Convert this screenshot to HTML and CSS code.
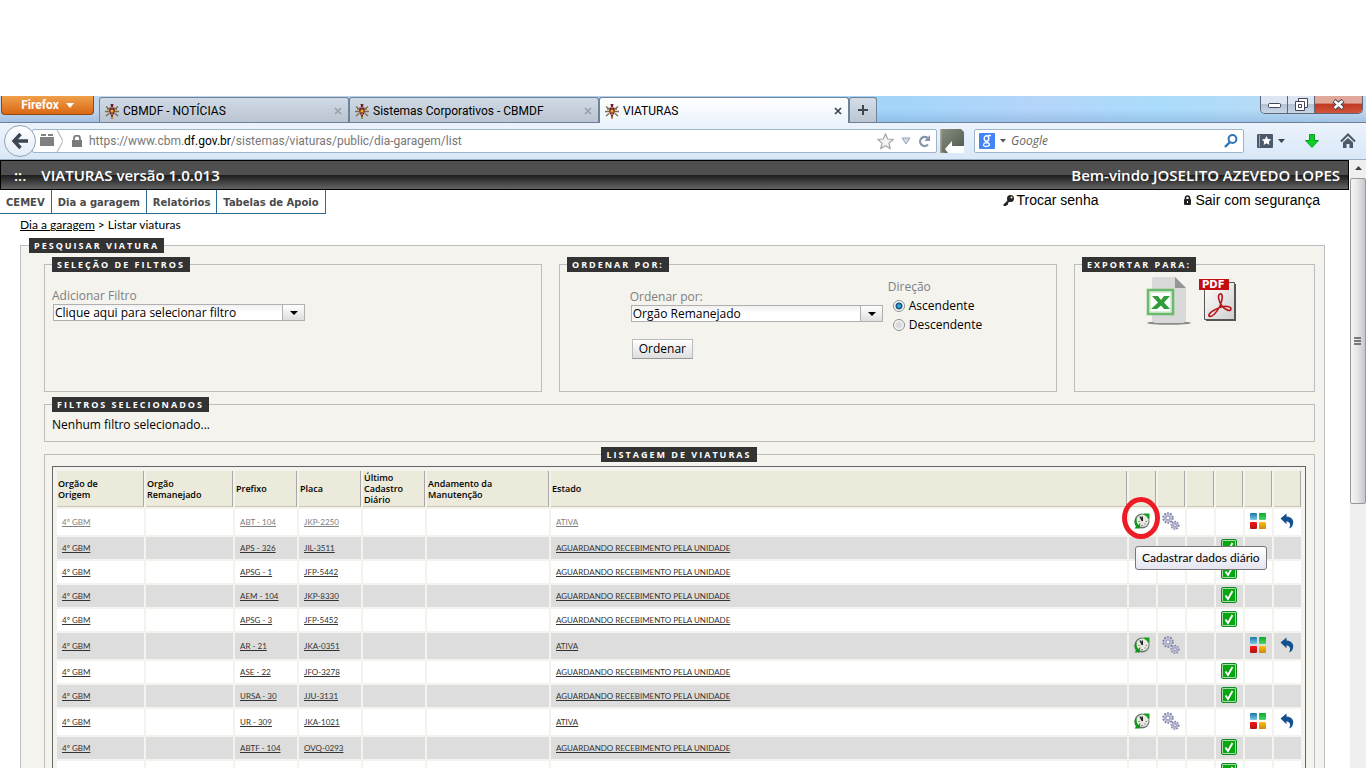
FILE: index.html
```html
<!DOCTYPE html>
<html lang="pt-BR">
<head>
<meta charset="utf-8">
<title>VIATURAS</title>
<link rel="stylesheet" href="styles.css">
</head>
<body>
<svg class="sprite" aria-hidden="true">
  <symbol id="crest" viewBox="0 0 16 16">
    <path d="M2 3.500l3 2.500M14 3.500L11 6M1 8.500h4M11 8.500h4M2 13l3-2.500M14 13l-3-2.500M3 6h2M11 6h2" stroke="#7d6f45" stroke-width="1.400"/>
    <path d="M6.500 1h3L9 4H7zM7 12h2v3.500H7z" fill="#6b1f2a"/>
    <path d="M5.500 4.500h5l.5 3.500-1 3.500H6L5 8z" fill="#6b1f2a"/>
    <path d="M8 5.500l2.500 2.500L8 11 5.500 8z" fill="#d8a820"/>
    <circle cx="8" cy="8" r="1.500" fill="#f6e21c" stroke="#a82828" stroke-width=".8"/>
    <path d="M8 13.500v2" stroke="#c8b020" stroke-width="1.500"/>
  </symbol>
  <symbol id="clock" viewBox="0 0 16 16">
    <circle cx="8" cy="8" r="7.500" fill="#66786a"/>
    <circle cx="8.300" cy="7.800" r="6.200" fill="#e9e9e2"/>
    <path d="M6 3.500L8.300 8V3.500" fill="none" stroke="#222" stroke-width="1.400"/>
    <path d="M4.500 8.500h1M8 12v1.200M11.800 8.500h1M10.500 11h1M5.500 11h1" stroke="#555" stroke-width="1.200"/>
    <path d="M10 .5h5.500V6.500L13.500 4.500C12.600 3.200 11.500 2.300 10 2z" fill="#12a51c"/>
    <path d="M1.500 5C-.2 9 .5 11.500 2 13.500L.5 15.500H6V10.500L4.500 12C3 10.500 2.200 8.500 2.700 5.500z" fill="#12951c"/>
  </symbol>
  <symbol id="gears" viewBox="0 0 18 18">
    <circle cx="6" cy="6" r="4.700" fill="none" stroke="#77799a" stroke-width="2" stroke-dasharray="1.800 1.150"/>
    <circle cx="6" cy="6" r="3.200" fill="#fff" stroke="#b9bbd6" stroke-width="2.400"/>
    <circle cx="6" cy="6" r="1.900" fill="none" stroke="#77799a" stroke-width=".7"/>
    <circle cx="13" cy="13.300" r="3.500" fill="none" stroke="#77799a" stroke-width="2" stroke-dasharray="1.500 1.100"/>
    <circle cx="13" cy="13.300" r="2.400" fill="#fff" stroke="#b3b5d4" stroke-width="2"/>
    <circle cx="13" cy="13.300" r="1.300" fill="none" stroke="#77799a" stroke-width=".7"/>
  </symbol>
  <linearGradient id="gb" x2="0" y2="1"><stop stop-color="#1976a8"/><stop offset="1" stop-color="#7cc6e8"/></linearGradient>
  <linearGradient id="gg" x2="0" y2="1"><stop stop-color="#06a828"/><stop offset="1" stop-color="#4fd66a"/></linearGradient>
  <linearGradient id="gr" x2="0" y2="1"><stop stop-color="#fa1414"/><stop offset="1" stop-color="#b01515"/></linearGradient>
  <linearGradient id="gy" x2="0" y2="1"><stop stop-color="#fdc010"/><stop offset="1" stop-color="#c98a08"/></linearGradient>
  <linearGradient id="gp" x2="1" y2="1"><stop stop-color="#fff"/><stop offset="1" stop-color="#cfcfcf"/></linearGradient>
  <linearGradient id="gm" x2="1" y2="1"><stop stop-color="#8a9080"/><stop offset="1" stop-color="#4c564a"/></linearGradient>
  <symbol id="squares" viewBox="0 0 16 16">
    <rect width="7" height="7" rx="1" fill="url(#gb)"/>
    <rect x="9" width="7" height="7" rx="1" fill="url(#gg)"/>
    <rect y="9" width="7" height="7" rx="1" fill="url(#gr)"/>
    <rect x="9" y="9" width="7" height="7" rx="1" fill="url(#gy)"/>
  </symbol>
  <symbol id="undo" viewBox="0 0 16 16">
    <path d="M1.500 5.500L7.500.500v3c6 .3 8.500 5 5.500 10-.8 1-1.800 1.700-3 2 2-3.500 1.500-6.500-2.500-7.300v3z" fill="#14508f"/>
  </symbol>
  <symbol id="check" viewBox="0 0 16 16">
    <rect x=".5" y=".5" width="15" height="15" rx="1.500" fill="#a5dba5" stroke="#118a1b"/>
    <rect x="2" y="2" width="12" height="12" fill="#0aa512"/>
    <path d="M4.500 8.500l2.500 3.500 4.500-8" fill="none" stroke="#fff" stroke-width="1.900"/>
  </symbol>
  <symbol id="close" viewBox="0 0 8 8"><path d="M1 1l6 6M7 1L1 7" stroke="currentColor" stroke-width="1.700"/></symbol>
</svg>

<header class="browser">
  <div class="titlebar">
    <button class="firefox" type="button">Firefox <span class="caret"></span></button>
    <nav class="tabs">
      <div class="tab"><svg class="i16"><use href="#crest"/></svg><span class="tab-name">CBMDF - NOTÍCIAS</span><svg class="i8"><use href="#close"/></svg></div>
      <div class="tab"><svg class="i16"><use href="#crest"/></svg><span class="tab-name">Sistemas Corporativos - CBMDF</span><svg class="i8"><use href="#close"/></svg></div>
      <div class="tab tab-active"><svg class="i16"><use href="#crest"/></svg><span class="tab-name">VIATURAS</span><svg class="i8"><use href="#close"/></svg></div>
      <button class="tab-new" type="button" aria-label="Nova aba"><svg width="12" height="12"><path d="M6 1v10M1 6h10" stroke="#3c4650" stroke-width="2"/></svg></button>
    </nav>
    <div class="controls">
      <button type="button" class="ctl" aria-label="Minimizar"><svg width="13" height="6"><rect x=".5" y="1.500" width="12" height="4" rx="1" fill="#fff" stroke="#445"/></svg></button>
      <button type="button" class="ctl" aria-label="Restaurar"><svg width="13" height="13"><path d="M3.500 3V.5h9v9H10M.5 3.500h9v9h-9zM3.500 6.500h3v3h-3z" fill="#fff" stroke="#445"/></svg></button>
      <button type="button" class="ctl ctl-close" aria-label="Fechar"><svg width="13" height="11"><path d="M2 1.500l9 8M11 1.500l-9 8" stroke="#445" stroke-width="4.500"/><path d="M2.500 2l8 7M10.500 2l-8 7" stroke="#fff" stroke-width="2.500"/></svg></button>
    </div>
  </div>
  <div class="toolbar">
    <button class="back" type="button" aria-label="Voltar"><svg width="18" height="18"><path d="M9.500 2L3 9l6.500 7M3.500 9H17" fill="none" stroke="#3b4652" stroke-width="3.400"/></svg></button>
    <div class="urlbar">
      <svg width="26" height="22"><path d="M3 7h14v9H3zM4 4h5v2H4zM11 4h5v2h-5z" fill="#808080"/><path d="M20 0l6 11-6 11" fill="none" stroke="#c4c8cc" stroke-width="1.500"/></svg>
      <svg width="10" height="12" class="lock"><path d="M0 5h10v7H0z" fill="#7b7b7b"/><path d="M2 6V3.500a3 3 0 016 0V6" fill="none" stroke="#7b7b7b" stroke-width="1.800"/></svg>
      <span class="url">https://www.cbm.<b>df.gov.br</b>/sistemas/viaturas/public/dia-garagem/list</span>
      <svg width="17" height="17"><path d="M8.500 1l2.200 5 5.300.500-4 3.600 1.200 5.400-4.700-2.800-4.700 2.800L5 10.100 1 6.500 6.300 6z" fill="#f3f3f3" stroke="#a5a5a5" stroke-width="1.200"/></svg>
      <svg width="10" height="8"><path d="M1 1h8L5 7z" fill="#d2dbe6" stroke="#9aa6b4"/></svg>
      <svg width="13" height="13"><path d="M10 9.500A4.500 4.500 0 119.500 3" fill="none" stroke="#8796a8" stroke-width="2.300"/><path d="M12 0v6H6.500z" fill="#8796a8"/></svg>
    </div>
    <svg class="addon" width="24" height="24"><path d="M0 0h21l3 3v21H0z" fill="url(#gm)"/><path d="M5 20l7-8v5h12v7H8z" fill="#fff"/><path d="M0 0h1.500v22L4 24H0z" fill="#fff" opacity=".3"/></svg>
    <label class="search">
      <svg width="16" height="16"><rect width="16" height="16" rx="1" fill="#4285f4"/><ellipse cx="7.500" cy="5.500" rx="2.300" ry="2.700" fill="none" stroke="#fff" stroke-width="1.400"/><path d="M9 2.500h3M8 8c-1.500 1.500 2.500 1.500 2.500 3.500S4.500 14.500 4.500 12s3-2.200 4-2" fill="none" stroke="#fff" stroke-width="1.300"/></svg>
      <svg width="6" height="4"><path d="M0 0h6L3 3.500z" fill="#555"/></svg>
      <input type="text" placeholder="Google" aria-label="Pesquisar">
      <svg width="14" height="14"><circle cx="8.500" cy="5" r="3.900" fill="none" stroke="#2f74b5" stroke-width="2"/><path d="M6 8l-5 5" stroke="#2f74b5" stroke-width="2.400"/></svg>
    </label>
    <svg class="bookmarks" width="28" height="16"><rect y="1" width="16" height="14" rx="1" fill="#4b5968"/><path d="M2.500 2v12" stroke="#9aa6b2"/><path d="M9.500 3l1.400 3 3.300.400-2.400 2.300.600 3.300-2.900-1.700L6.600 12l.600-3.300-2.400-2.300 3.300-.400z" fill="#fff"/><path d="M21 6h7l-3.500 4z" fill="#3c4650"/></svg>
    <svg class="download" width="14" height="14"><path d="M4.500.500h5V6.500h4L7 13.500.500 6.500h4z" fill="#0ccf25" stroke="#0a9e1d"/></svg>
    <svg width="16" height="16"><path d="M1 8.500l7-7 7 7" fill="none" stroke="#4b5968" stroke-width="2"/><path d="M3 9.500L8 5l5 4.500V15H9.500v-4h-3v4H3z" fill="#4b5968"/></svg>
  </div>
</header>

<div class="viewport">
  <main class="page">
    <div class="banner"><h1><span class="dots">::.</span>VIATURAS versão 1.0.013</h1><span>Bem-vindo JOSELITO AZEVEDO LOPES</span></div>
    <div class="menubar">
      <nav class="menu"><a href="#">CEMEV</a><a href="#">Dia a garagem</a><a href="#">Relatórios</a><a href="#">Tabelas de Apoio</a></nav>
      <div class="account">
        <a href="#"><svg width="11" height="11"><circle cx="7.500" cy="3.500" r="3.500" fill="#222"/><path d="M5.500 5L1 9.500V11h2V9.500h1.500V8l2-2" fill="#222" stroke="#222"/><circle cx="8.500" cy="2.500" r="1" fill="#fff"/></svg>Trocar senha</a>
        <a href="#"><svg width="8" height="10"><rect y="4" width="7" height="6" rx="1" fill="#222"/><path d="M1.500 5V3a2 2 0 014 0v2" fill="none" stroke="#222" stroke-width="1.600"/><path d="M3.500 6v2" stroke="#fff"/></svg>Sair com segurança</a>
      </div>
    </div>
    <nav class="crumbs"><a href="#">Dia a garagem</a> &gt; Listar viaturas</nav>

    <fieldset class="outer">
      <legend>PESQUISAR VIATURA</legend>
      <div class="stack">
        <div class="panels">
          <fieldset class="panel">
            <legend>SELEÇÃO DE FILTROS</legend>
            <div class="field field-filter">
              <label for="filtro">Adicionar Filtro</label>
              <div class="combo"><select id="filtro"><option>Clique aqui para selecionar filtro</option></select></div>
            </div>
          </fieldset>
          <fieldset class="panel">
            <legend>ORDENAR POR:</legend>
            <div class="order">
              <div class="field field-order">
                <label for="ordem">Ordenar por:</label>
                <div class="combo"><select id="ordem"><option>Orgão Remanejado</option></select></div>
                <button class="submit" type="button">Ordenar</button>
              </div>
              <div class="direction" role="radiogroup" aria-labelledby="dir">
                <span id="dir">Direção</span>
                <label><input type="radio" name="dir" checked>Ascendente</label>
                <label><input type="radio" name="dir">Descendente</label>
              </div>
            </div>
          </fieldset>
          <fieldset class="panel">
            <legend>EXPORTAR PARA:</legend>
            <div class="export">
              <a href="#" aria-label="Excel"><svg width="46" height="50"><ellipse cx="23" cy="47" rx="22" ry="1.800" fill="#8a8a8a"/><path d="M8 1h21l11 11v31a4 4 0 01-4 4H10a4 4 0 01-4-4V3a2 2 0 012-2z" fill="#d9d9d9"/><path d="M29 1l11 11H29z" fill="#959595"/><rect x="2" y="14" width="25" height="24" fill="#d9efd7" stroke="#69bb6b" stroke-width="2.500"/><rect x="5" y="17" width="19" height="18" fill="#fff"/><path d="M6 20h6l3 4 3-4h6l-6 6.500 6 6.500h-6l-3-3.500-4 3.500H5l7-6.500z" fill="#309b3b"/></svg></a>
              <a href="#" aria-label="PDF"><svg width="40" height="46"><path d="M8 8h30v37H8z" fill="#555"/><path d="M6.500 6.500h30v37h-30z" fill="url(#gp)" stroke="#555"/><rect x="1" y="3" width="30" height="11" fill="#c40d12"/><text x="4" y="12" class="pdf-text">PDF</text><path d="M11 40c-1-3 7-7 12-9 4-1 10-1 10 2s-6 1-9-3c-3-4-5-11-2-12s3 5 0 12c-3 6-8 12-11 10z" fill="none" stroke="#b8151b" stroke-width="1.600"/></svg></a>
            </div>
          </fieldset>
        </div>

        <fieldset class="chosen">
          <legend>FILTROS SELECIONADOS</legend>
          <p>Nenhum filtro selecionado...</p>
        </fieldset>

        <fieldset class="listing">
          <legend>LISTAGEM DE VIATURAS</legend>
          <table class="grid">
            <colgroup><col class="c-org"><col class="c-org"><col class="c-code"><col class="c-code"><col class="c-code"><col class="c-maint"><col><col class="c-act"><col class="c-act"><col class="c-act"><col class="c-act"><col class="c-act"><col class="c-act"></colgroup>
            <thead><tr><th>Orgão de<br>Origem</th><th>Orgão<br>Remanejado</th><th>Prefixo</th><th>Placa</th><th>Último<br>Cadastro<br>Diário</th><th>Andamento da<br>Manutenção</th><th>Estado</th><th></th><th></th><th></th><th></th><th></th><th></th></tr></thead>
            <tbody>
              <tr class="tall hover"><td><a href="#">4º GBM</a></td><td></td><td><a href="#">ABT - 104</a></td><td><a href="#">JKP-2250</a></td><td></td><td></td><td><a href="#">ATIVA</a></td><td class="act marked"><svg class="i16"><use href="#clock"/></svg><span class="ring"></span><span class="tooltip" role="tooltip">Cadastrar dados diário</span></td><td class="act"><svg class="i18"><use href="#gears"/></svg></td><td></td><td></td><td class="act"><svg class="i16"><use href="#squares"/></svg></td><td class="act"><svg class="i16"><use href="#undo"/></svg></td></tr>
              <tr><td><a href="#">4º GBM</a></td><td></td><td><a href="#">APS - 326</a></td><td><a href="#">JIL-3511</a></td><td></td><td></td><td><a href="#">AGUARDANDO RECEBIMENTO PELA UNIDADE</a></td><td></td><td></td><td></td><td class="act"><svg class="i16"><use href="#check"/></svg></td><td></td><td></td></tr>
              <tr><td><a href="#">4º GBM</a></td><td></td><td><a href="#">APSG - 1</a></td><td><a href="#">JFP-5442</a></td><td></td><td></td><td><a href="#">AGUARDANDO RECEBIMENTO PELA UNIDADE</a></td><td></td><td></td><td></td><td class="act"><svg class="i16"><use href="#check"/></svg></td><td></td><td></td></tr>
              <tr><td><a href="#">4º GBM</a></td><td></td><td><a href="#">AEM - 104</a></td><td><a href="#">JKP-8330</a></td><td></td><td></td><td><a href="#">AGUARDANDO RECEBIMENTO PELA UNIDADE</a></td><td></td><td></td><td></td><td class="act"><svg class="i16"><use href="#check"/></svg></td><td></td><td></td></tr>
              <tr><td><a href="#">4º GBM</a></td><td></td><td><a href="#">APSG - 3</a></td><td><a href="#">JFP-5452</a></td><td></td><td></td><td><a href="#">AGUARDANDO RECEBIMENTO PELA UNIDADE</a></td><td></td><td></td><td></td><td class="act"><svg class="i16"><use href="#check"/></svg></td><td></td><td></td></tr>
              <tr class="tall"><td><a href="#">4º GBM</a></td><td></td><td><a href="#">AR - 21</a></td><td><a href="#">JKA-0351</a></td><td></td><td></td><td><a href="#">ATIVA</a></td><td class="act"><svg class="i16"><use href="#clock"/></svg></td><td class="act"><svg class="i18"><use href="#gears"/></svg></td><td></td><td></td><td class="act"><svg class="i16"><use href="#squares"/></svg></td><td class="act"><svg class="i16"><use href="#undo"/></svg></td></tr>
              <tr><td><a href="#">4º GBM</a></td><td></td><td><a href="#">ASE - 22</a></td><td><a href="#">JFO-3278</a></td><td></td><td></td><td><a href="#">AGUARDANDO RECEBIMENTO PELA UNIDADE</a></td><td></td><td></td><td></td><td class="act"><svg class="i16"><use href="#check"/></svg></td><td></td><td></td></tr>
              <tr><td><a href="#">4º GBM</a></td><td></td><td><a href="#">URSA - 30</a></td><td><a href="#">JJU-3131</a></td><td></td><td></td><td><a href="#">AGUARDANDO RECEBIMENTO PELA UNIDADE</a></td><td></td><td></td><td></td><td class="act"><svg class="i16"><use href="#check"/></svg></td><td></td><td></td></tr>
              <tr class="tall"><td><a href="#">4º GBM</a></td><td></td><td><a href="#">UR - 309</a></td><td><a href="#">JKA-1021</a></td><td></td><td></td><td><a href="#">ATIVA</a></td><td class="act"><svg class="i16"><use href="#clock"/></svg></td><td class="act"><svg class="i18"><use href="#gears"/></svg></td><td></td><td></td><td class="act"><svg class="i16"><use href="#squares"/></svg></td><td class="act"><svg class="i16"><use href="#undo"/></svg></td></tr>
              <tr><td><a href="#">4º GBM</a></td><td></td><td><a href="#">ABTF - 104</a></td><td><a href="#">OVQ-0293</a></td><td></td><td></td><td><a href="#">AGUARDANDO RECEBIMENTO PELA UNIDADE</a></td><td></td><td></td><td></td><td class="act"><svg class="i16"><use href="#check"/></svg></td><td></td><td></td></tr>
              <tr><td></td><td></td><td></td><td></td><td></td><td></td><td></td><td></td><td></td><td></td><td class="act"><svg class="i16"><use href="#check"/></svg></td><td></td><td></td></tr>
            </tbody>
          </table>
        </fieldset>
      </div>
    </fieldset>
  </main>
  <div class="scrollbar">
    <svg width="16" height="17"><path d="M5 10l3.500-4L12 10z" fill="#404040"/></svg>
    <div class="thumb"><svg width="8" height="9"><path d="M0 1h7M0 4h7M0 7h7" stroke="#555" stroke-width="1.500"/></svg></div>
  </div>
</div>
</body>
</html>
```
FILE: styles.css
```css
* { box-sizing: border-box; }
body {
  margin: 0;
  padding-top: 96px;
  height: 100vh;
  display: flex;
  flex-direction: column;
  overflow: hidden;
  background: #fff;
  color: #000;
  font: 12px/16px "Open Sans", "Noto Sans", sans-serif;
}
a { color: inherit; }
svg { flex: none; display: block; }
button { font: inherit; color: inherit; padding: 0; border: 0; background: none; }
.sprite { position: absolute; width: 0; height: 0; }
.i8 { width: 8px; height: 8px; }
.i16 { width: 16px; height: 16px; }
.i18 { width: 18px; height: 18px; }

/* browser window */
.browser { flex: none; font-family: Roboto, sans-serif; }
.titlebar {
  display: flex;
  align-items: flex-start;
  height: 27px;
  padding: 0 3px 0 1px;
  background: linear-gradient(rgba(120,170,220,0) 50%, rgba(110,150,200,.35)), linear-gradient(90deg, #c4d9f0, #b4cfe9 40%, #a3d6fa 66%, #b5d5fa 76%, #aadcfb 85%, #c3daf2);
  border-bottom: 1px solid #6c8099;
}
.firefox {
  width: 93px;
  height: 19px;
  display: flex;
  align-items: center;
  justify-content: center;
  gap: 7px;
  color: #fff;
  font-weight: 700;
  background: linear-gradient(#f0a04c, #db6714);
  border: 1px solid #8c4a17;
  border-top: 0;
  border-radius: 0 0 4px 4px;
}
.caret { border: 4px solid transparent; border-top: 5px solid #fff; border-bottom: 0; }
.tabs { display: flex; padding: 1px 0 0 5px; flex: 0 1 783px; }
.tab {
  flex: 1;
  display: flex;
  align-items: center;
  gap: 3px;
  height: 25px;
  padding: 1px 6px 0 4px;
  color: #98a2ae;
  background: linear-gradient(#cfdae6, #bac5d1);
  border: 1px solid #6f8296;
  border-bottom: 0;
  border-radius: 3px 3px 0 0;
}
.tab-name { flex: 1; color: #000; white-space: nowrap; }
.tab-active { height: 26px; margin-bottom: -1px; padding-top: 0; background: linear-gradient(#fff, #ecf3fc); color: #3c4650; }
.tab-new {
  width: 28px;
  height: 25px;
  display: grid;
  place-items: center;
  background: linear-gradient(#d4dee9, #bac5d1);
  border: 1px solid #6f8296;
  border-bottom: 0;
  border-radius: 3px 3px 0 0;
}
.controls {
  display: flex;
  margin-left: auto;
  height: 18px;
  border: 1px solid #5b6676;
  border-top: 0;
  border-radius: 0 0 5px 5px;
  overflow: hidden;
}
.ctl { width: 27px; display: grid; place-items: center; background: linear-gradient(#dbe6f2 45%, #b4c3d6 50%, #c8d6e6); border-right: 1px solid #5b6676; }
.ctl-close { width: 47px; border: 0; background: linear-gradient(#e0a79b 40%, #c23a22 50%, #d2543a); }
.toolbar {
  display: flex;
  align-items: center;
  height: 37px;
  padding: 0 10px 0 4px;
  background: linear-gradient(#ecf3fc, #d9e8f7);
  border-bottom: 1px solid #9bb0c6;
}
.back {
  width: 32px;
  height: 32px;
  display: grid;
  place-items: center;
  background: linear-gradient(#fff, #e3ecf6);
  border: 1px solid #8fa3ba;
  border-radius: 50%;
  z-index: 1;
}
.urlbar, .search {
  display: flex;
  align-items: center;
  height: 24px;
  background: #fff;
  border: 1px solid #a0b4c8;
  border-radius: 2px;
}
.urlbar { flex: 1; margin-left: -4px; padding: 0 5px 0 4px; gap: 7px; }
.lock { margin-left: 2px; }
.url { flex: 1; color: #777; white-space: nowrap; overflow: hidden; }
.url b { color: #000; font-weight: 400; }
.addon { margin: 0 10px 0 3px; }
.search { width: 270px; padding: 0 5px 0 4px; gap: 5px; }
.search input { flex: 1; min-width: 0; border: 0; padding: 0; outline: 0; font: italic 12px/16px "Open Sans", sans-serif; }
.search input::placeholder { color: #666; opacity: 1; }
.bookmarks { margin: 0 20px 0 13px; }
.download { margin-right: 21px; }

/* page */
.viewport { flex: 1; min-height: 0; display: flex; }
.page { flex: 1; min-width: 0; overflow: hidden; }
.banner {
  display: flex;
  justify-content: space-between;
  align-items: center;
  height: 30px;
  margin-right: 1px;
  padding: 0 8px 0 13px;
  color: #fff;
  font-size: 15px;
  font-weight: 600;
  background: linear-gradient(#4f4f4f 50%, #1c1c1c 50%, #636363);
  border: 1px solid #000;
}
.banner h1 { margin: 0; font: inherit; }
.dots { margin-right: 15px; }
.menubar { display: flex; justify-content: space-between; }
.menu { display: flex; }
.menu a {
  padding: 5px 6px 2px;
  color: #4a4a4a;
  font: bold 10px/16px "DejaVu Sans", sans-serif;
  text-decoration: none;
  border: solid #2e6a96;
  border-width: 0 1px 1px 0;
}
.account { display: flex; align-items: flex-start; gap: 86px; padding: 2px 30px 0 0; font: 14px/16px "Liberation Sans", Arial, sans-serif; }
.account a { display: flex; align-items: center; gap: 3px; text-decoration: none; }
.crumbs { padding: 3px 20px 4px; margin-bottom: 1px; font-family: Lato, sans-serif; }

fieldset { min-width: 0; margin: 0; padding: 0 8px; border: 1px solid #bdbdbd; }
legend {
  height: 15px;
  padding: 0 5px;
  color: #fff;
  background: #333;
  font: bold 9px/15px "Open Sans", sans-serif;
  letter-spacing: 2px;
  white-space: nowrap;
}
.outer { margin: 0 25px 0 20px; background: #f4f3ee; }
.stack { display: flex; flex-direction: column; gap: 5px; padding: 4px 1px 9px 15px; }
.panels { display: grid; grid-template-columns: 498fr 498fr 241fr; gap: 17px; }
.panel { height: 135px; padding: 0 7px; }
.field { display: flex; flex-direction: column; align-items: flex-start; color: #808080; }
.field-filter { padding-top: 16px; }
.field-order { padding-top: 17px; }
.combo { position: relative; width: 252px; margin-left: 1px; }
.combo select {
  display: block;
  width: 100%;
  height: 17px;
  padding: 0 22px 0 1px;
  appearance: none;
  color: #000;
  font: 12px/15px "Open Sans", sans-serif;
  background: linear-gradient(#f1f1f1, #fff 50%);
  border: 1px solid #b0b0b0;
  border-radius: 0;
}
.combo::before {
  content: "";
  position: absolute;
  inset: 1px 1px 1px auto;
  width: 21px;
  background: linear-gradient(#fff, #dedede);
  border-left: 1px solid #b0b0b0;
  pointer-events: none;
}
.combo::after {
  content: "";
  position: absolute;
  right: 7px;
  top: 7px;
  border: 4px solid transparent;
  border-top-color: #000;
  border-bottom: 0;
  pointer-events: none;
}
.submit {
  height: 20px;
  margin: 17px 0 0 2px;
  padding: 0 6px;
  color: #000;
  background: linear-gradient(#fff, #dedede);
  border: 1px solid #bbb;
  border-bottom-color: #999;
}
.order { display: flex; justify-content: center; gap: 5px; padding-right: 4px; }
.direction { display: flex; flex-direction: column; gap: 3px; padding-top: 7px; color: #808080; }
.direction label { display: flex; align-items: center; gap: 4px; color: #000; }
.direction input {
  appearance: none;
  width: 12px;
  height: 12px;
  margin: 0 0 0 5px;
  border: 1px solid #8e8f8f;
  border-radius: 50%;
  background: radial-gradient(#d8dadd 35%, #fff 75%);
}
.direction input:checked { background: radial-gradient(circle, #3fa9dd 0 1px, #0c4a75 3px, #fff 4px); }
.export { display: flex; justify-content: center; gap: 6px; padding: 4px 6px 0 0; }
.pdf-text { font: bold 10px "DejaVu Sans", sans-serif; fill: #fff; }
.chosen { padding: 0 7px; }
.chosen p { margin: 5px 0 8px; }

/* vehicle table */
.listing legend { margin: 0 auto 4px; }
.listing { padding: 0 8px 0 7px; }
.grid { width: 100%; table-layout: fixed; border: 1px solid #666; border-spacing: 2px; padding: 2px; }
.c-org { width: 87px; }
.c-code { width: 62px; }
.c-maint { width: 122px; }
.c-act { width: 27px; }
.grid th {
  height: 36px;
  padding: 1px;
  text-align: left;
  font: 600 9px/11px "Open Sans", sans-serif;
  background: #ebeadb;
  border: solid #a8a8a8;
  border-width: 0 1px 1px 0;
  border-bottom-color: #c9c6b4;
}
.grid td { height: 22px; padding: 0 5px; background: #fff; color: #333; font: 8px/12px Lato, sans-serif; white-space: nowrap; }
.grid tr:nth-child(even) td { background: #ddd; }
.grid .tall td { height: 26px; }
.grid .hover td { color: #808080; }
.grid .act svg { margin: auto; }
.grid td.act { padding: 0 1px 2px 0; }
.grid td.marked { position: relative; }
.ring { position: absolute; left: -7px; top: -12px; width: 38px; height: 42px; border: 5px solid #ed1c24; border-radius: 50%; z-index: 1; }
.grid .tooltip {
  position: absolute;
  left: 6px;
  top: 37px;
  z-index: 2;
  padding: 3px 6px;
  color: #000;
  font: 12px/16px Lato, sans-serif;
  background: linear-gradient(#fff, #e4e5f0);
  border: 1px solid #767676;
  border-radius: 3px;
}

.scrollbar { width: 16px; background: #efefef; display: flex; flex-direction: column; }
.thumb {
  flex: 0 0 326px;
  margin-top: 1px;
  display: grid;
  place-items: center;
  background: linear-gradient(90deg, #f5f5f5, #e6e6ea 45%, #c5c5cb);
  border: 1px solid #989898;
  border-radius: 2px;
}
```
